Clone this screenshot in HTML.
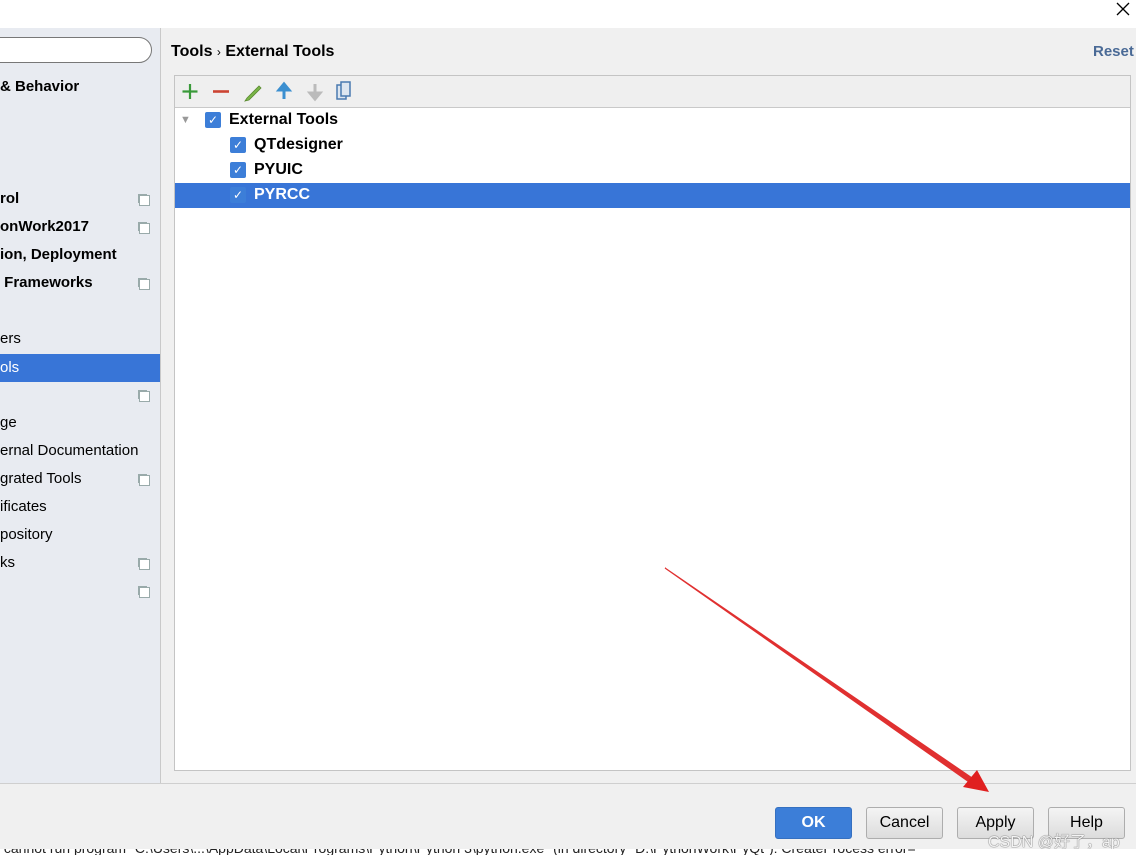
<!DOCTYPE html><html><head><style>
body{margin:0;width:1136px;height:855px;overflow:hidden;background:#f0f0f0;font-family:"Liberation Sans",sans-serif;font-size:15px;position:relative;color:#000}
.a{position:absolute}
.side{left:0;top:28px;width:160px;height:755px;background:#e8ebf1;border-right:1px solid #c9c9c9}
.si{position:absolute;left:0;white-space:nowrap;height:28px;line-height:28px}
.b{font-weight:bold}
.ic{position:absolute;left:139px;width:9px;height:9px;border:1px solid #9aa;background:#fff;box-shadow:-2px -2px 0 -1px #9aa}
.cb{position:absolute;width:16px;height:16px;background:#3c7ed8;border-radius:2px;color:#fff;font-size:12px;line-height:16px;text-align:center}
.btn{position:absolute;top:807px;height:30px;border:1px solid #adadad;border-radius:3px;background:linear-gradient(#f4f4f4,#dcdcdc);text-align:center;line-height:30px;font-size:16px}
</style></head><body>
<div class="a" style="left:0;top:0;width:1136px;height:28px;background:#fff"></div>
<svg class="a" style="left:1116px;top:2px" width="14" height="14"><path d="M1 1L13 13M13 1L1 13" stroke="#000" stroke-width="1.3"/></svg>
<div class="a side"></div>
<div class="a" style="left:-20px;top:37px;width:170px;height:24px;border:1px solid #777;border-radius:13px;background:#fff"></div>
<div class="si b" style="top:73px">&amp; Behavior</div>
<div class="si b" style="top:185px">rol</div><div class="ic" style="top:195px"></div>
<div class="si b" style="top:213px">onWork2017</div><div class="ic" style="top:223px"></div>
<div class="si b" style="top:241px">ion, Deployment</div>
<div class="si b" style="top:269px">&nbsp;Frameworks</div><div class="ic" style="top:279px"></div>
<div class="si" style="top:325px">ers</div>
<div class="si" style="top:354px;width:160px;background:#3875d7;color:#fff">ols</div>
<div class="ic" style="top:391px"></div>
<div class="si" style="top:409px">ge</div>
<div class="si" style="top:437px">ernal Documentation</div>
<div class="si" style="top:465px">grated Tools</div><div class="ic" style="top:475px"></div>
<div class="si" style="top:493px">ificates</div>
<div class="si" style="top:521px">pository</div>
<div class="si" style="top:549px">ks</div><div class="ic" style="top:559px"></div>
<div class="ic" style="top:587px"></div>
<div class="a b" style="left:171px;top:43px;font-size:16px">Tools <span style="font-weight:normal;font-size:12px">›</span> External Tools</div>
<div class="a b" style="left:1093px;top:43px;color:#4a6a96;font-size:15px">Reset</div>
<div class="a" style="left:174px;top:75px;width:955px;height:694px;border:1px solid #c4c4c4;background:#fff"></div>
<div class="a" style="left:175px;top:76px;width:955px;height:31px;background:#efefef;border-bottom:1px solid #c9c9c9"></div>
<svg class="a" style="left:175px;top:76px" width="190" height="31">
<path d="M15 8V23M7.5 15.5H22.5" stroke="#3a9a3a" stroke-width="2.2"/>
<path d="M38 15.5H54" stroke="#cc4433" stroke-width="2.6"/>
<path d="M72 22L84 10L86 12L74 24L70 25Z" fill="#7ab648" stroke="#5a8a30" stroke-width="0.8"/>
<path d="M109 23V14H104L109 8L114 14H109" fill="#3b8fd0" stroke="#3b8fd0" stroke-width="3"/>
<path d="M140 8V17H135L140 23L145 17H140" fill="#bbb" stroke="#bbb" stroke-width="3"/>
<rect x="162" y="9" width="9" height="14" fill="#dde6f0" stroke="#4a7ab0" stroke-width="1.5"/>
<rect x="166" y="6" width="9" height="14" fill="#dde6f0" stroke="#4a7ab0" stroke-width="1.5"/>
</svg>
<div class="a" style="left:180px;top:114px;color:#999;font-size:11px">▼</div>
<div class="cb" style="left:205px;top:112px">✓</div><div class="a b" style="left:229px;top:111px;font-size:16px">External Tools</div>
<div class="cb" style="left:230px;top:137px">✓</div><div class="a b" style="left:254px;top:136px;font-size:16px">QTdesigner</div>
<div class="cb" style="left:230px;top:162px">✓</div><div class="a b" style="left:254px;top:161px;font-size:16px">PYUIC</div>
<div class="a" style="left:175px;top:183px;width:955px;height:25px;background:#3875d7"></div>
<div class="cb" style="left:230px;top:187px">✓</div><div class="a b" style="left:254px;top:186px;font-size:16px;color:#fff">PYRCC</div>
<div class="a" style="left:0;top:783px;width:1136px;height:1px;background:#cfcfcf"></div>
<svg class="a" style="left:0;top:0" width="1136" height="855"><path d="M665 568L975 780L972 784Z" fill="#e03030" stroke="#e03030" stroke-width="1.2"/><polygon points="989,792 963,787 977,770" fill="#e02020"/></svg>
<div class="btn" style="left:775px;width:75px;background:#3c7ed8;border-color:#3570c0;color:#fff;font-weight:bold">OK</div>
<div class="btn" style="left:866px;width:75px">Cancel</div>
<div class="btn" style="left:957px;width:75px">Apply</div>
<div class="btn" style="left:1048px;width:75px">Help</div>
<div class="a" style="left:988px;top:828px;color:#f4f4f4;font-size:16px;text-shadow:0 0 1px #666,0 0 1px #666">CSDN @好了，ap</div>
<div class="a" style="left:0;top:849px;width:1136px;height:6px;background:#fff;overflow:hidden"><div style="font-size:14px;margin-top:-9px;color:#222">&nbsp;cannot run program "C:\Users\...\AppData\Local\Programs\Python\Python 3\python.exe" (in directory "D:\PythonWork\PyQt"): CreateProcess error=</div></div>
</body></html>
